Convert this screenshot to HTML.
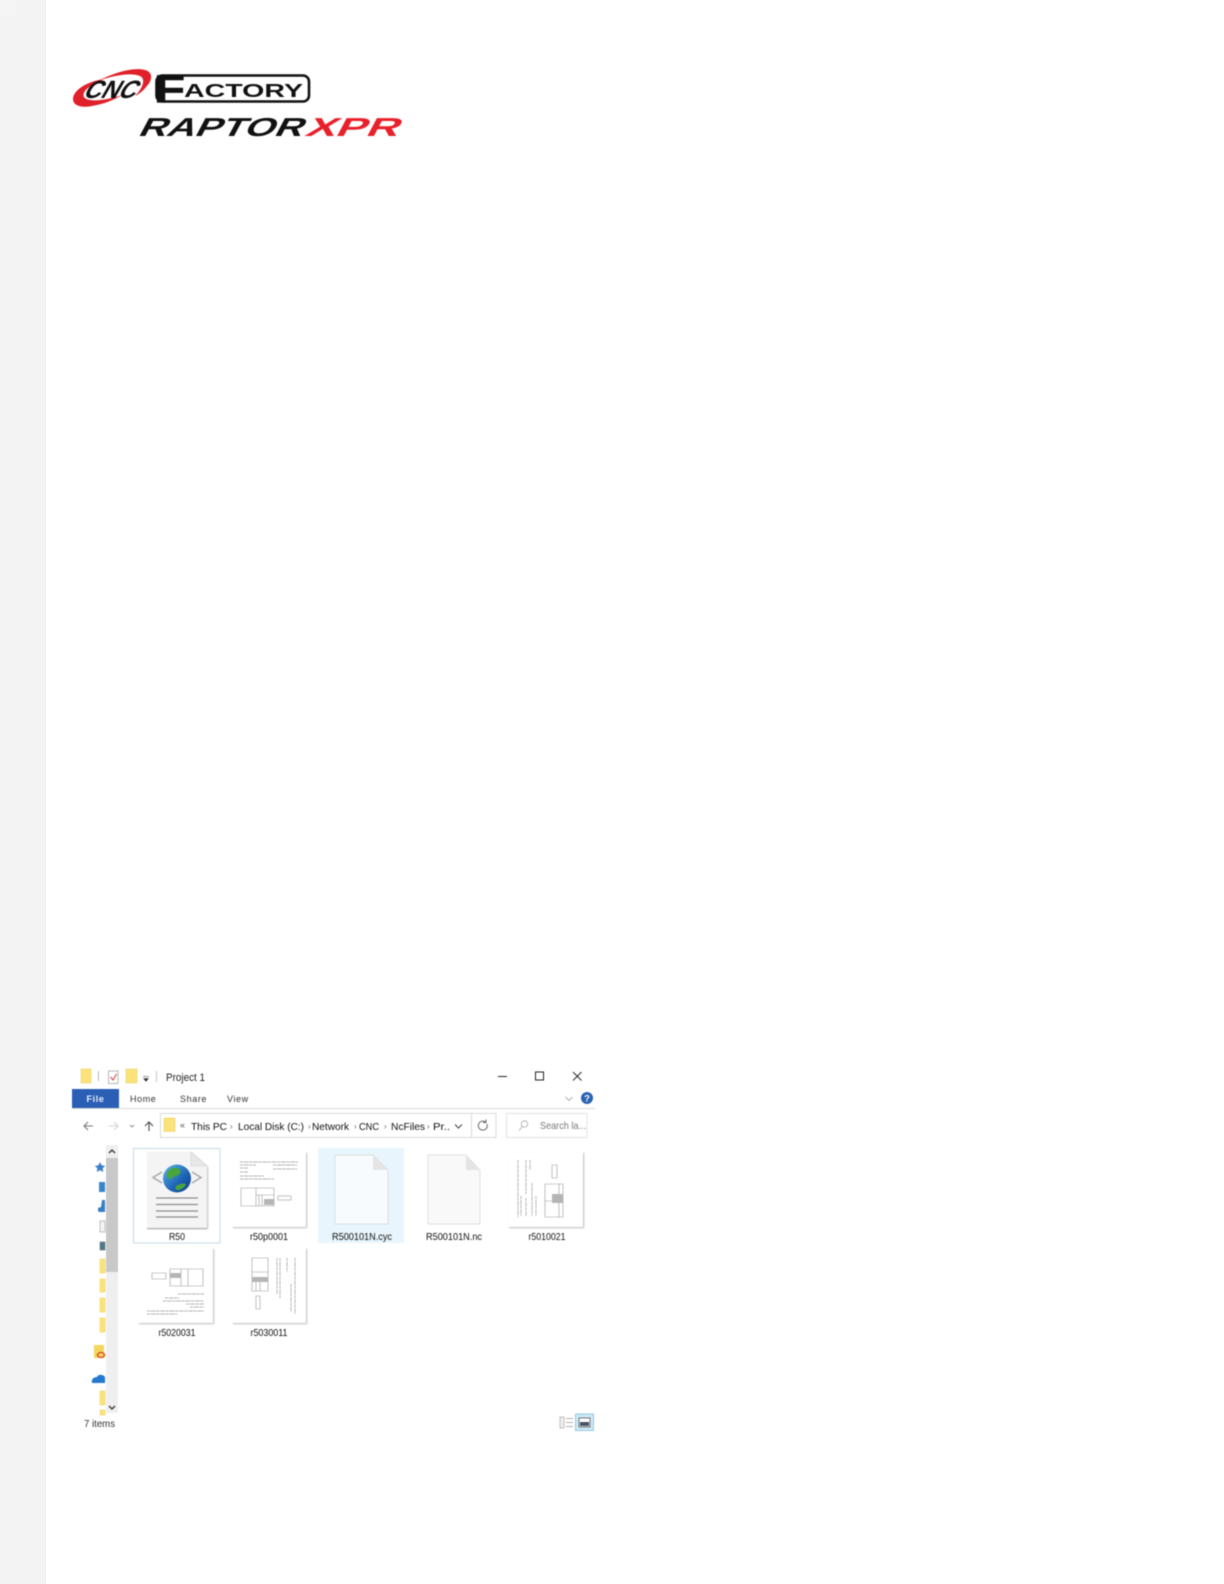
<!DOCTYPE html>
<html lang="en">
<head>
<meta charset="utf-8">
<title>CNC Factory Raptor XPR</title>
<style>
html,body{margin:0;padding:0;background:#fff;width:1224px;height:1584px;overflow:hidden}
svg{display:block;position:absolute;left:0;top:0}
text{font-family:"Liberation Sans",sans-serif}
.b{filter:blur(.45px)}
.lbl{font-size:10.5px;fill:#111;text-anchor:middle}
.addr{font-size:10.5px;fill:#111}
.tab{font-size:9px;fill:#333;letter-spacing:.6px}
.fld{fill:#fbe27a;stroke:#f0d468;stroke-width:.6}
.thin{fill:none;stroke:#999;stroke-width:.6}
.tl{stroke:#999;stroke-width:.7;stroke-dasharray:3 .7 5 .6;fill:none}
</style>
</head>
<body>
<svg width="1224" height="1584" viewBox="0 0 1224 1584" xmlns="http://www.w3.org/2000/svg">
<defs>
<filter id="sh" x="-10%" y="-10%" width="125%" height="125%"><feDropShadow dx="1" dy="1" stdDeviation=".9" flood-color="#000" flood-opacity=".28"/></filter>
<linearGradient id="gl" x1="0" y1="0" x2="1" y2="1"><stop offset="0" stop-color="#58b8e8"/><stop offset=".6" stop-color="#1d62b5"/><stop offset="1" stop-color="#0e3a85"/></linearGradient>
</defs>
<rect width="1224" height="1584" fill="#fff"/>
<rect x="0" y="0" width="46" height="1584" fill="#f3f3f3"/>
<rect x="45" y="0" width="1" height="1584" fill="#efefef"/>
<rect x="0" y="0" width="16" height="15" fill="#f5f5f5"/>

<!-- Logo -->
<g class="b">
<path d="M104 79C88 81 73 90 73 99C73 106 82 108 92 106C104 104 114 100 122 95C108 100 88 103 84 97C81 91 92 84 104 79Z" fill="#e0202a"/>
<path d="M100 80C115 72 135 67 145 70C153 72 153 80 146 87C143 91 139 94 135 96C143 88 146 79 140 76C130 72 113 76 100 80Z" fill="#e0202a"/>
<text transform="translate(82,98) skewX(-30)" font-size="25" font-weight="700" textLength="52" lengthAdjust="spacingAndGlyphs" style="fill:#111">CNC</text>
<rect x="156.500" y="75.500" width="152.500" height="26" rx="6" fill="#fff" stroke="#111" stroke-width="2.600"/>
<text x="154" y="102.500" font-size="39" font-weight="700" textLength="31" lengthAdjust="spacingAndGlyphs" stroke="#111" stroke-width=".8" style="fill:#111">F</text>
<text x="184" y="97" font-size="18" font-weight="700" textLength="119" lengthAdjust="spacingAndGlyphs" style="fill:#111">ACTORY</text>
<text transform="translate(137,136) skewX(-28)" font-size="26" font-weight="700" textLength="164" lengthAdjust="spacingAndGlyphs" style="fill:#111">RAPTOR</text>
<text transform="translate(304,136) skewX(-28)" font-size="26" font-weight="700" textLength="93" lengthAdjust="spacingAndGlyphs" style="fill:#e8202a">XPR</text>
</g>

<g class="b">
<!-- Title bar -->
<rect x="81" y="1069" width="10" height="14" class="fld"/>
<rect x="98" y="1071" width=".8" height="10" fill="#aaa"/>
<rect x="108.500" y="1071" width="9.500" height="12.500" fill="#fff" stroke="#999" stroke-width=".7"/>
<path d="M110.500 1077l2.500 3 3.500-6" fill="none" stroke="#d43d3d" stroke-width="1"/>
<rect x="126" y="1069" width="11" height="14" class="fld"/>
<path d="M143 1076.500h6M143.500 1078.500h5l-2.500 3z" fill="#333" stroke="#333" stroke-width=".5"/>
<rect x="156" y="1071" width=".8" height="11" fill="#bbb"/>
<text x="166" y="1081" font-size="11" textLength="39" lengthAdjust="spacingAndGlyphs" style="fill:#222">Project 1</text>
<path d="M498 1076.500h9" stroke="#222" stroke-width="1"/>
<rect x="535.500" y="1072" width="8" height="8" fill="none" stroke="#222" stroke-width="1"/>
<path d="M573 1072l8.500 8.500M581.500 1072l-8.500 8.500" stroke="#222" stroke-width=".9"/>

<!-- Ribbon -->
<rect x="72" y="1089" width="47" height="19" fill="#2b5eb5"/>
<text x="95.500" y="1102" font-size="9" font-weight="700" text-anchor="middle" letter-spacing=".6" style="fill:#e8eefb">File</text>
<text x="130" y="1102" class="tab">Home</text>
<text x="180" y="1102" class="tab">Share</text>
<text x="227" y="1102" class="tab">View</text>
<rect x="72" y="1108" width="523" height="1" fill="#d9d9d9"/>
<path d="M565.500 1097l3.500 3.500 3.500-3.500" fill="none" stroke="#aaa" stroke-width=".9"/>
<circle cx="587" cy="1098" r="6" fill="#2b62b4"/>
<text x="587" y="1101.500" font-size="9.500" font-weight="700" text-anchor="middle" style="fill:#fff">?</text>

<!-- Toolbar -->
<path d="M93 1126H84M88 1122l-4 4 4 4" fill="none" stroke="#777" stroke-width="1.100"/>
<path d="M109 1126h9M114 1122l4 4-4 4" fill="none" stroke="#d4d4d4" stroke-width="1.100"/>
<path d="M130 1125l2 2 2-2" fill="none" stroke="#888" stroke-width=".9"/>
<path d="M149 1131v-9M145 1126l4-4 4 4" fill="none" stroke="#555" stroke-width="1.200"/>
<rect x="160.500" y="1113.500" width="335.500" height="24" fill="#fff" stroke="#d9d9d9"/>
<rect x="471" y="1113.500" width="1" height="24" fill="#d9d9d9"/>
<rect x="164" y="1118" width="11" height="13.500" class="fld"/>
<text x="180" y="1128" font-size="9" style="fill:#555">«</text>
<text x="191" y="1130" class="addr" textLength="36" lengthAdjust="spacingAndGlyphs">This PC</text>
<text x="230" y="1129" font-size="8" style="fill:#666">›</text>
<text x="238" y="1130" class="addr" textLength="66" lengthAdjust="spacingAndGlyphs">Local Disk (C:)</text>
<text x="308" y="1129" font-size="8" style="fill:#666">›</text>
<text x="312" y="1130" class="addr" textLength="37" lengthAdjust="spacingAndGlyphs">Network</text>
<text x="354" y="1129" font-size="8" style="fill:#666">›</text>
<text x="359" y="1130" class="addr" textLength="20" lengthAdjust="spacingAndGlyphs">CNC</text>
<text x="384" y="1129" font-size="8" style="fill:#666">›</text>
<text x="391" y="1130" class="addr" textLength="34" lengthAdjust="spacingAndGlyphs">NcFiles</text>
<text x="427" y="1129" font-size="8" style="fill:#666">›</text>
<text x="433" y="1130" class="addr" textLength="17" lengthAdjust="spacingAndGlyphs">Pr..</text>
<path d="M455 1124.500l3.500 3.500 3.500-3.500" fill="none" stroke="#555" stroke-width="1.200"/>
<path d="M487 1124a4.500 4.500 0 1 1-1.500-2M486 1119.500v3h-3" fill="none" stroke="#666" stroke-width="1"/>
<rect x="506.500" y="1113.500" width="80.500" height="24" fill="#fff" stroke="#e2e2e2"/>
<circle cx="524.500" cy="1124" r="3.200" fill="none" stroke="#aaa" stroke-width=".8"/>
<path d="M522.500 1126.500l-3.500 4" stroke="#aaa" stroke-width=".9"/>
<text x="540" y="1129" font-size="10.500" textLength="46" lengthAdjust="spacingAndGlyphs" style="fill:#777">Search la...</text>

<!-- Nav pane -->
<path d="M100 1162l1.700 3.400 3.500.5-2.500 2.500.6 3.600-3.300-1.700-3.200 1.700.6-3.600-2.500-2.500 3.500-.5z" fill="#3c7fc7"/>
<rect x="99" y="1182" width="6" height="10" fill="#3a84cc"/>
<path d="M105 1200v12h-6l-1-1v-3l3-1 1-7z" fill="#3a7fc4"/>
<rect x="100" y="1221" width="5" height="11" fill="#f4f4f4" stroke="#999" stroke-width=".6"/>
<rect x="100" y="1242" width="5" height="8" fill="#4a7a8c" stroke="#777" stroke-width=".6"/>
<rect x="100" y="1259" width="5" height="14" class="fld"/>
<rect x="100" y="1279" width="5" height="13" class="fld"/>
<rect x="100" y="1298" width="5" height="14" class="fld"/>
<rect x="100" y="1318" width="5" height="14" class="fld"/>
<rect x="94" y="1345" width="10" height="13" fill="#f6d55c"/>
<ellipse cx="101" cy="1355" rx="3.500" ry="2.500" fill="none" stroke="#d8401f" stroke-width="1.300"/>
<path d="M92 1383c-1-4 2-6 5-6 1-3 6-3 8 0v6z" fill="#2478cf"/>
<rect x="100" y="1391" width="5" height="14" class="fld"/>
<rect x="100" y="1410" width="5" height="5" class="fld"/>

<!-- Scrollbar -->
<rect x="106" y="1145" width="12" height="268" fill="#f0efef"/>
<rect x="106" y="1158" width="12" height="114" fill="#c8c8c8"/>
<path d="M109 1153l3-3 3 3" fill="none" stroke="#333" stroke-width="1.300"/>
<path d="M109 1406l3 3 3-3" fill="none" stroke="#333" stroke-width="1.300"/>

<!-- R50 -->
<rect x="133.500" y="1148.500" width="86.500" height="94.500" fill="#fff" stroke="#c3dbe6"/>
<path d="M147 1152h44l16 14v62h-60z" fill="#f4f4f4" filter="url(#sh)"/>
<path d="M147 1228.500h60" stroke="#aaa" stroke-width="1"/>
<path d="M191 1152l16 14h-16z" fill="#e8e8e8" stroke="#cfcfcf" stroke-width=".6"/>
<path d="M162 1172l-9 5.500 9 5.500" fill="none" stroke="#a9a9a9" stroke-width="1.500"/>
<path d="M192 1172l9 5.500-9 5.500" fill="none" stroke="#a9a9a9" stroke-width="1.500"/>
<circle cx="177" cy="1178.500" r="14" fill="url(#gl)"/>
<path d="M169 1170c4-3 9-3 11 0s-2 6-5 6-2 4-5 3-5-5-1-9zM176 1186c3-2 8-3 10-2-1 3-5 6-8 6s-3-2-2-4z" fill="#4aa53a"/>
<path d="M156 1198h42M156 1204.500h42M156 1211h42M156 1217h42" stroke="#8c8c8c" stroke-width="1.300"/>
<text x="177" y="1240" class="lbl" textLength="16" lengthAdjust="spacingAndGlyphs">R50</text>

<!-- r50p0001 -->
<rect x="232" y="1152" width="74" height="75" fill="#fff" filter="url(#sh)"/>
<path d="M240 1162h58M240 1165h16M273 1165h24M240 1168h8M240 1172h8M273 1169h24M240 1176h24M240 1179h34" class="tl"/>
<path d="M241 1188h33v18h-33zM256 1188v18M256 1195h18M259 1195v11M262 1195v11" class="thin"/>
<rect x="264" y="1199" width="10" height="6" fill="#b5b5b5"/>
<rect x="278" y="1196" width="13" height="4" class="thin"/>
<text x="269" y="1240" class="lbl" textLength="38" lengthAdjust="spacingAndGlyphs">r50p0001</text>

<!-- cyc -->
<rect x="318" y="1148" width="86" height="95" fill="#e8f5fc"/>
<path d="M335 1155h38l15 15v54h-53z" fill="#f7fbfd" stroke="#d6d6d6" stroke-width=".7"/>
<path d="M373 1155l15 15h-15z" fill="#e4e4e4"/>
<text x="362" y="1240" class="lbl" textLength="60" lengthAdjust="spacingAndGlyphs">R500101N.cyc</text>

<!-- nc -->
<path d="M428 1155h38l14 15v54h-52z" fill="#f9f9f9" stroke="#d6d6d6" stroke-width=".7"/>
<path d="M466 1155l14 15h-14z" fill="#e4e4e4"/>
<text x="454" y="1240" class="lbl" textLength="56" lengthAdjust="spacingAndGlyphs">R500101N.nc</text>

<!-- r5010021 -->
<rect x="508" y="1152" width="75" height="75" fill="#fff" filter="url(#sh)"/>
<path d="M518 1160v57M521 1196v20M526 1160v34M526 1198v18M530 1160v10M532 1183v33M536 1196v20" class="tl"/>
<path d="M552 1165h5v13h-5zM545 1184h18v33h-18zM559 1184v33M545 1201h18" class="thin"/>
<rect x="552" y="1194" width="11" height="9" fill="#b5b5b5"/>
<text x="547" y="1240" class="lbl" textLength="37" lengthAdjust="spacingAndGlyphs">r5010021</text>

<!-- r5020031 -->
<rect x="138" y="1248" width="75" height="75" fill="#fff" filter="url(#sh)"/>
<path d="M152 1273h14v6h-14zM170 1269h33v17h-33zM181 1269v17M188 1269v17M170 1276h11" class="thin"/>
<rect x="170" y="1273" width="11" height="5" fill="#b5b5b5"/>
<path d="M178 1294h26M165 1298h14M163 1301h41M186 1304h18M190 1307h14M147 1311h57M147 1314h30" class="tl"/>
<text x="177" y="1336" class="lbl" textLength="37" lengthAdjust="spacingAndGlyphs">r5020031</text>

<!-- r5030011 -->
<rect x="232" y="1248" width="74" height="75" fill="#fff" filter="url(#sh)"/>
<path d="M252 1258h16v33h-16zM252 1272h16M256 1278v13M260 1278v13M256 1296h4v13h-4z" class="thin"/>
<rect x="252" y="1277" width="16" height="5" fill="#b5b5b5"/>
<path d="M277 1258v36M280 1258v40M287 1258v14M291 1284v28M295 1258v56" class="tl"/>
<text x="269" y="1336" class="lbl" textLength="37" lengthAdjust="spacingAndGlyphs">r5030011</text>

<!-- Status bar -->
<text x="84" y="1427" font-size="10.500" textLength="31" lengthAdjust="spacingAndGlyphs" style="fill:#333">7 items</text>
<rect x="560" y="1417" width="4" height="11" fill="#f0f0f0" stroke="#999" stroke-width=".6"/>
<path d="M566 1418.500h7M566 1422.500h7M566 1426.500h7" stroke="#999" stroke-width=".8"/>
<rect x="575.500" y="1414" width="18" height="16.500" fill="#cfe8f5" stroke="#8fcbe0"/>
<rect x="579" y="1418" width="11" height="9" fill="#fff" stroke="#555" stroke-width=".8"/>
<rect x="580" y="1422" width="9" height="4" fill="#456"/>
</g>
</svg>
</body>
</html>
